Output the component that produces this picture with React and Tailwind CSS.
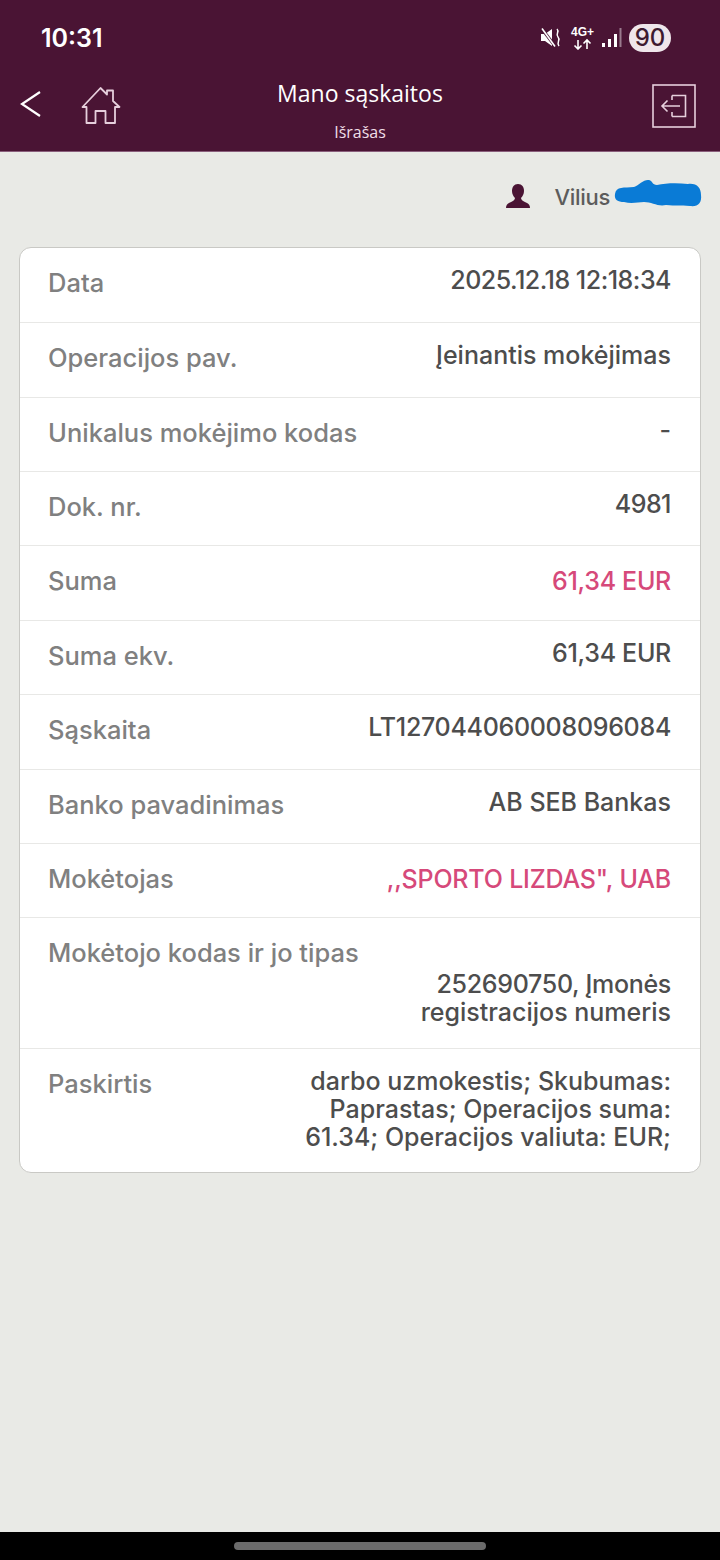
import React from "react";

const rows = [
  { label: "Data", value: "2025.12.18 12:18:34", tight: "tracking-[-0.5px]" },
  { label: "Operacijos pav.", value: "Įeinantis mokėjimas" },
  { label: "Unikalus mokėjimo kodas", value: "-" },
  { label: "Dok. nr.", value: "4981", tight: "tracking-[-0.5px]" },
  { label: "Suma", value: "61,34 EUR", pink: true, tight: "tracking-[-0.3px]" },
  { label: "Suma ekv.", value: "61,34 EUR", tight: "tracking-[-0.3px]" },
  { label: "Sąskaita", value: "LT127044060008096084", tight: "tracking-[-0.3px]" },
  { label: "Banko pavadinimas", value: "AB SEB Bankas" },
  { label: "Mokėtojas", value: ",,SPORTO LIZDAS\", UAB", pink: true, tight: "tracking-[-0.2px]" },
];

function HomeIcon() {
  return (
    <svg width="40" height="40" viewBox="0 0 40 40" fill="none" stroke="#e6cfdc" strokeWidth="1.8" strokeLinejoin="round">
      <path d="M1.5 21 L19.5 2 L26 8.5 V4.5 H32 V15 L38.5 21 H34 V37 H24.5 V25 H14.5 V37 H5.5 V21 Z" />
    </svg>
  );
}

function LogoutIcon() {
  return (
    <svg width="44" height="44" viewBox="0 0 44 44" fill="none" stroke="#e6cfdc" strokeWidth="1.6">
      <rect x="1" y="1" width="42" height="42" />
      <path d="M20 11.5 H33.5 V32.5 H20 M20 11.5 V16 M20 32.5 V28 M10 22 H28 M15.5 16.5 L10 22 L15.5 27.5" />
    </svg>
  );
}

function MuteIcon() {
  return (
    <svg width="21" height="20" viewBox="0 0 21 20" fill="none">
      <path d="M0 6 H4 L11 1 V18 L4 13 H0 Z" fill="#fff" />
      <path d="M1 1 L14 18" stroke="#4a1434" strokeWidth="3" />
      <path d="M1 0.5 L14 18.5" stroke="#fff" strokeWidth="1.6" />
      <path d="M16 1 C19 4 14 6 17 9 C20 12 15 14 18 18" stroke="#fff" strokeWidth="1.5" />
    </svg>
  );
}

function NetworkIcon() {
  return (
    <svg width="23" height="24" viewBox="0 0 23 24" fill="none" stroke="#fff" strokeWidth="1.6">
      <path d="M7 14 V23 M3.5 19.5 L7 23 L10.5 19.5 M16 23 V14 M12.5 17.5 L16 14 L19.5 17.5" />
    </svg>
  );
}

function SignalIcon() {
  return (
    <svg width="20" height="20" viewBox="0 0 20 20">
      <rect x="0" y="15" width="3" height="4" fill="#fff" />
      <rect x="6" y="11" width="3" height="8" fill="#fff" />
      <rect x="12" y="6" width="3" height="13" fill="#fff" />
      <rect x="17.5" y="0" width="2" height="19" fill="#9a7a8d" />
    </svg>
  );
}

function UserIcon() {
  return (
    <svg width="26" height="26" viewBox="0 0 26 26" fill="#4a1434">
      <path d="M13 1 C17 1 19 4 19 8 C19 11 17.5 13.5 16 15 C16 17 18 18 21 19.5 C24 20.5 25 22.5 25 25 H1 C1 22.5 2 20.5 5 19.5 C8 18 10 17 10 15 C8.5 13.5 7 11 7 8 C7 4 9 1 13 1 Z" />
    </svg>
  );
}

function Scribble() {
  return (
    <svg width="88" height="30" viewBox="0 0 88 30" className="absolute left-[614px] top-[178px]" fill="#0a7bd6">
      <path d="M1 16 C2 8 10 10 20 9 C25 7 30 1 35 2 C39 3 38 7 43 7 C52 5 64 5 74 6 C83 5 87 10 87 17 C88 25 84 29 76 28 C66 27 62 28 52 27 C44 29 38 24 30 24 C24 24 18 26 10 24 C4 24 0 22 1 16 Z" />
    </svg>
  );
}

export default function App() {
  return (
    <div className="relative flex h-[1560px] w-[720px] flex-col overflow-hidden bg-[#e9eae6] font-['Inter',sans-serif]">
      {/* header */}
      <div className="h-[152px] shrink-0 border-b border-[#8a5f7c] bg-[#4a1434] text-white">
        <div className="flex h-[76px] items-center justify-between pl-[41px] pr-[49px]">
          <span className="text-[25px] font-semibold leading-none">10:31</span>
          <div className="flex items-center">
            <MuteIcon />
            <div className="relative ml-[9px] h-[24px] w-[23px]">
              <span className="absolute left-0 top-0 font-['Liberation_Sans',sans-serif] text-[12px] font-bold leading-[12px]">4G+</span>
              <NetworkIcon />
            </div>
            <div className="ml-[8px]"><SignalIcon /></div>
            <div className="ml-[7px] flex h-[28px] w-[42px] items-center justify-center rounded-full bg-[#efe6eb] text-[24px] font-medium text-[#3d1a30]">90</div>
          </div>
        </div>
        <div className="flex items-start justify-between px-[20px]">
          <div className="flex w-[150px] items-center">
            <svg width="21" height="26" viewBox="0 0 21 26" fill="none" stroke="#fff" strokeWidth="2.2" className="mt-[6px]">
              <path d="M20 1 L2 13 L20 25" />
            </svg>
            <div className="ml-[40px] mt-[10px]"><HomeIcon /></div>
          </div>
          <div className="flex flex-col items-center">
            <span className="font-['Open_Sans',sans-serif] text-[23px] leading-[34px]">Mano sąskaitos</span>
            <span className="mt-[12px] font-['Open_Sans',sans-serif] text-[16px] leading-[20px] text-[#f0dfe8]">Išrašas</span>
          </div>
          <div className="flex w-[150px] justify-end pr-[4px] pt-[8px]"><LogoutIcon /></div>
        </div>
      </div>

      {/* user line */}
      <div className="flex h-[95px] shrink-0 items-start justify-end pr-[110px] pt-[31px]">
        <UserIcon />
        <span className="ml-[23px] text-[22px] font-medium leading-[28px] tracking-[-0.3px] text-[#5c5c5c]">Vilius</span>
      </div>
      <Scribble />

      {/* details card */}
      <div className="mx-[19px] overflow-hidden rounded-[12px] border border-[#c9c9c5] bg-white text-[25px] font-medium">
        {rows.map((r, i) => (
          <div key={r.label} className={`flex h-[74.36px] items-start justify-between pl-[28px] pr-[29px] ${i > 0 ? "border-t border-[#e8e8e6]" : ""}`}>
            <span className="mt-[17px] text-[25.5px] leading-[36px] text-[#808080]">{r.label}</span>
            <span className={`leading-[36px] ${r.tight || ""} ${r.pink ? "mt-[17px] text-[#d6497a]" : "mt-[14px] text-[#4d4d4d]"}`}>{r.value}</span>
          </div>
        ))}
        <div className="flex h-[130.6px] flex-col border-t border-[#e8e8e6] pl-[28px] pr-[29px] pt-[17px]">
          <span className="text-[25.5px] leading-[36px] text-[#808080]">Mokėtojo kodas ir jo tipas</span>
          <span className="mt-[-1px] text-right leading-[28px] text-[#4d4d4d]"><span className="tracking-[-0.3px]">252690750, Įmonės</span><br />registracijos numeris</span>
        </div>
        <div className="flex h-[124px] items-start justify-between border-t border-[#e8e8e6] pl-[28px] pr-[29px] pt-[17px]">
          <span className="text-[25.5px] leading-[36px] text-[#808080]">Paskirtis</span>
          <span className="mt-[1px] text-right leading-[28px] text-[#4d4d4d]">darbo uzmokestis; Skubumas:<br />Paprastas; Operacijos suma:<br />61.34; Operacijos valiuta: EUR;</span>
        </div>
      </div>

      {/* android nav */}
      <div className="mt-auto flex h-[28px] shrink-0 items-start justify-center bg-black pt-[10px]">
        <div className="h-[8px] w-[252px] rounded-full bg-[#6b6b6b]" />
      </div>
    </div>
  );
}
